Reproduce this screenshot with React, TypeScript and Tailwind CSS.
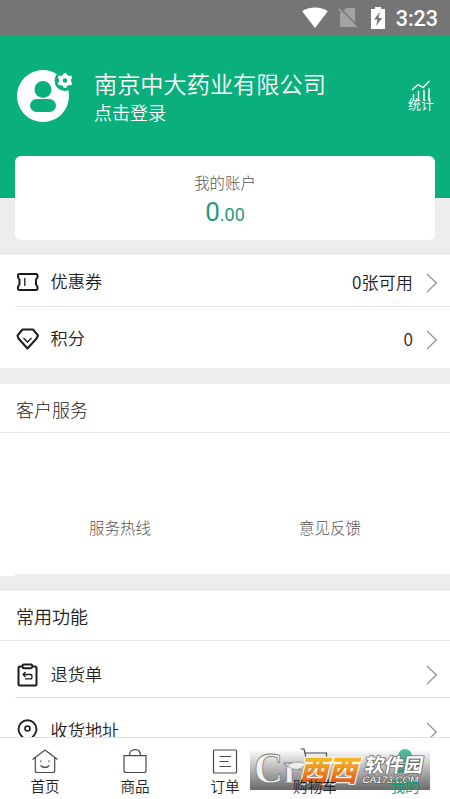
import React from "react";

function Chevron() {
  return (
    <svg width="12" height="20" viewBox="0 0 12 20" fill="none" stroke="#8c8c8c" strokeWidth="1.1">
      <path d="M1 1l9.300 9L1 19" />
    </svg>
  );
}

function StatusBar() {
  return (
    <header className="relative flex h-9 shrink-0 items-center justify-end bg-[#757575] pr-[12px] text-white">
      <svg className="mr-[10px]" width="26" height="22" viewBox="0 0 26 22" fill="#fff">
        <path d="M.2 4.200C7-.8 19-.8 25.800 4.200L13 21z" />
      </svg>
      <svg className="mr-[13px]" width="20" height="22" viewBox="0 0 20 22">
        <path d="M8 1h9v19H2V7z" fill="#a3a3a3" />
        <path d="M2 1l18 18.500" stroke="#757575" strokeWidth="1.500" />
        <path d="M.8 2l18 18.500" stroke="#a3a3a3" strokeWidth="1.600" />
      </svg>
      <svg className="mr-[11px]" width="14" height="22" viewBox="0 0 14 22">
        <path d="M4 0h6v2h4v20H0V2h4z" fill="#fff" />
        <path d="M9 5L3 12.500h3.500L5 19l6-8H7.500z" fill="#757575" />
      </svg>
      <span className="mt-[2px] font-['Roboto',sans-serif] text-[21.500px] leading-none font-medium">3:23</span>
    </header>
  );
}

function Avatar() {
  return (
    <svg width="58" height="56" viewBox="0 0 58 56">
      <circle cx="27" cy="28" r="26" fill="#fff" />
      <circle cx="27" cy="21.500" r="8.500" fill="#0aaf7c" />
      <rect x="14" y="31" width="26" height="13" rx="6.500" fill="#0aaf7c" />
      <circle cx="49" cy="12.500" r="10.500" fill="#0aaf7c" />
      <circle cx="49" cy="12.500" r="4.200" fill="none" stroke="#fff" strokeWidth="3.800" />
      <g stroke="#fff" strokeWidth="3.800" strokeLinecap="round" transform="translate(0 .5)">
        <path d="M49 6.800v-.5M49 17.200v.5M44.200 9.300l-.4-.2M44.200 14.700l-.4.2M53.800 9.300l.4-.2M53.800 14.700l.4.2" />
      </g>
    </svg>
  );
}

function ProfileHeader() {
  return (
    <section className="h-[162px] shrink-0 bg-[#0aaf7c] font-[350] text-white">
      <div className="flex items-start pt-[32px] pr-[16px] pl-4">
        <Avatar />
        <div className="ml-[20px] pt-[1px]">
          <div className="text-[23.200px] leading-[28px]">南京中大药业有限公司</div>
          <div className="text-[18px] leading-[30px]">点击登录</div>
        </div>
        <div className="ml-auto flex flex-col items-center pt-[12px]">
          <svg width="22" height="22" viewBox="0 0 22 22" fill="none" stroke="#fff" strokeWidth="1.400">
            <path d="M2 10l6-5.500 5 3 6.500-6.500M3.500 21v-7M8.500 21V11M14 21v-11M19 21V8.500" />
          </svg>
          <span className="-mt-[6px] text-[13px] leading-[15px]">统计</span>
        </div>
      </div>
    </section>
  );
}

function AccountCard() {
  return (
    <section className="relative mx-[15px] -mt-[42px] flex h-[84px] shrink-0 flex-col items-center rounded-md bg-white pt-[16px]">
      <div className="text-[15.400px] leading-5 font-light text-[#555]">我的账户</div>
      <div className="mt-[3px] font-['Roboto',sans-serif] leading-[34px] text-[#269b79]">
        <span className="text-[26px]">0</span>
        <span className="text-[18px]">.00</span>
      </div>
    </section>
  );
}

const CouponIcon = () => (
  <svg width="24" height="24" viewBox="0 0 24 24" fill="none" stroke="#1c1c1c" strokeWidth="2" strokeLinejoin="round">
    <path d="M3.500 4h16.500q1.500 0 1.500 1.300V7.500l-1.500 2v5l1.500 2v2.200q0 1.300-1.500 1.300H3.500Q2 20 2 18.700v-2.200l1.500-2v-5L2 7.500V5.300Q2 4 3.500 4z" />
    <path d="M8.800 8v8" strokeWidth="1.300" />
  </svg>
);

const PointsIcon = () => (
  <svg width="24" height="24" viewBox="0 0 24 24" fill="none" stroke="#1c1c1c" strokeWidth="2" strokeLinejoin="round">
    <path d="M6.500 2.500h10.500l5 6-1.500 3L11.500 21.500 2.500 11.500l-1-3z" />
    <path d="M7.500 11l4 4 4-4" strokeWidth="1.400" />
  </svg>
);

const ReturnIcon = () => (
  <svg width="24" height="24" viewBox="0 0 24 24" fill="none" stroke="#1c1c1c" strokeWidth="2" strokeLinejoin="round">
    <path d="M6 3.500H4Q2.500 3.500 2.500 5v16q0 1.500 1.500 1.500h15q1.500 0 1.500-1.500V5q0-1.500-1.500-1.500h-2.500" />
    <path d="M8 1.500h7q1.300 0 1.300 1.800T15 5.200H8q-1.500 0-1.500-1.900T8 1.500z" />
    <path d="M7.500 11.500h7q1.500 0 1.500 2.200t-1.500 2.200H9M9.500 9L7 11.500l2.500 2.500" strokeWidth="1.300" />
  </svg>
);

const PinIcon = () => (
  <svg width="24" height="24" viewBox="0 0 24 24" fill="none" stroke="#1c1c1c" strokeWidth="1.900">
    <path d="M11.500 22.500S2.500 16.500 2.500 10.300a9 9 0 0 1 18 0C20.500 16.500 11.500 22.500 11.500 22.500z" />
    <circle cx="11.500" cy="9.500" r="2.500" strokeWidth="1.600" />
  </svg>
);

type RowProps = { icon: React.ReactNode; label: string; value?: string };

function Row({ icon, label, value }: RowProps) {
  return (
    <div className="flex w-full items-center pr-[12px] pl-4">
      {icon}
      <span className="-mt-[2px] ml-[10.500px] text-[17.200px] leading-6 font-[350] text-[#222]">{label}</span>
      <span className="-mt-[1px] mr-[13px] ml-auto text-[17.200px] leading-6 font-[350] text-[#222]">{value}</span>
      <span className="mt-[1px]">
        <Chevron />
      </span>
    </div>
  );
}

function Watermark() {
  return (
    <svg className="absolute top-[11px] left-[250px]" width="180" height="41" viewBox="0 0 180 41" overflow="visible">
      <defs>
        <linearGradient id="shade" x1="0" y1="0" x2="0" y2="1">
          <stop offset="0" stopColor="#555" stopOpacity="0" />
          <stop offset="1" stopColor="#555" stopOpacity=".88" />
        </linearGradient>
        <linearGradient id="orange" x1="0" y1="0" x2="0" y2="1">
          <stop offset="0.3" stopColor="#f5b52a" />
          <stop offset="0.9" stopColor="#dd501f" />
        </linearGradient>
      </defs>
      <rect width="180" height="41" fill="url(#shade)" />
      <text
        x="4"
        y="34"
        fontSize="45"
        fontWeight="700"
        textLength="47"
        lengthAdjust="spacingAndGlyphs"
        fontFamily="Liberation Serif, serif"
        fill="#f2f2f2"
        stroke="#777"
        strokeWidth=".8"
      >
        Cr
      </text>
      <path d="M37 17q8-7 19-2-8 10-19 2z" fill="#ededed" stroke="#777" strokeWidth=".6" />
      <text
        transform="skewX(-14)"
        x="57"
        y="32"
        fontSize="29"
        fontWeight="900"
        textLength="58"
        lengthAdjust="spacingAndGlyphs"
        fontFamily="Noto Sans CJK SC, sans-serif"
        fill="url(#orange)"
        stroke="#fff6e6"
        strokeWidth="2.400"
        paintOrder="stroke"
      >
        西西
      </text>
      <g transform="skewX(-10)" fill="#fff" stroke="#666" strokeWidth="1.600" paintOrder="stroke" strokeLinejoin="round">
        <text x="118" y="23.500" fontSize="19.500" fontWeight="700" fontFamily="Noto Sans CJK SC, sans-serif">软件园</text>
        <text x="118" y="34" fontSize="9.500" fontFamily="Liberation Sans, sans-serif" textLength="56" lengthAdjust="spacingAndGlyphs">CA173.COM</text>
      </g>
    </svg>
  );
}

const tabs = [
  {
    label: "首页",
    icon: <path d="M.5 10.500L13 1l12.500 9.500M3.300 8.800V21.500q0 2 2 2h15.400q2 0 2-2V8.800M8.500 16.500q4.500 4 9 0M9 11.500v1.500M17 11.500v1.500" />,
  },
  {
    label: "商品",
    icon: <path d="M2 6.700h22V21.500q0 2-2 2H4q-2 0-2-2zM7.500 6.500q0-5.800 5.500-5.800t5.500 5.800" />,
  },
  {
    label: "订单",
    icon: <path d="M2.500 1h21q1 0 1 1v21q0 1-1 1h-21q-1 0-1-1V2q0-1 1-1zM7.500 7.500H19M7.500 12.500h9M7.500 17.500H19" />,
  },
  {
    label: "购物车",
    icon: <path d="M-1.500 0H2l4 17h18.500V4H3.500" />,
  },
  {
    label: "我的",
    active: true,
    icon: <path d="M6 7a7 7 0 0 1 14 0 7 7 0 0 1-14 0zM3 24q0-9 10-9t10 9z" fill="#4fc09c" stroke="none" />,
  },
];

function TabBar() {
  return (
    <nav className="relative grid h-[62px] shrink-0 grid-cols-5 border-t border-[#e0e0e0] bg-white">
      {tabs.map((tab) => (
        <div key={tab.label} className="flex flex-col items-center pt-[11px]">
          <svg width="26" height="26" viewBox="0 0 26 26" fill="none" stroke="#444c52" strokeWidth="1.200" overflow="visible">
            {tab.icon}
          </svg>
          <span
            className={`relative z-10 mt-[1px] text-[14.600px] leading-5 font-[350] ${
              tab.active ? "text-[#0c9b70]" : "text-[#222]"
            }`}
          >
            {tab.label}
          </span>
        </div>
      ))}
      <Watermark />
    </nav>
  );
}

export default function App() {
  return (
    <div className="flex h-[799px] w-[450px] flex-col overflow-hidden bg-[#ededed] font-['Noto_Sans_CJK_SC',sans-serif]">
      <StatusBar />
      <main className="flex min-h-0 flex-1 flex-col overflow-hidden">
        <ProfileHeader />
        <AccountCard />

        {/* Coupons and points */}
        <section className="mt-[15px] shrink-0 bg-white">
          <div className="flex h-[51px] items-center pt-[3px]">
            <Row icon={<CouponIcon />} label="优惠券" value="0张可用" />
          </div>
          <div className="ml-[15px] h-px bg-[#e3e3e3]" />
          <div className="flex h-[61px] items-center pt-[3px]">
            <Row icon={<PointsIcon />} label="积分" value="0" />
          </div>
        </section>

        {/* Customer service */}
        <section className="mt-4 shrink-0 bg-white">
          <h2 className="flex h-[49px] items-center border-b border-[#e6e6e6] pt-[3px] pl-4 text-[18px] font-light text-[#222]">
            客户服务
          </h2>
          <div className="grid h-[141px] grid-cols-2 items-end px-[15px] pb-[37px] text-center text-[15.500px] leading-5 font-light text-[#555]">
            <span>服务热线</span>
            <span>意见反馈</span>
          </div>
          <div className="ml-[15px] h-[2px] bg-[#ededed]" />
        </section>

        {/* Common functions */}
        <section className="mt-[15px] shrink-0 bg-white">
          <h2 className="flex h-[50px] items-center border-b border-[#e6e6e6] pt-[2px] pl-4 text-[18px] font-[350] text-[#222]">
            常用功能
          </h2>
          <div className="flex h-[56px] items-center pt-[11px]">
            <Row icon={<ReturnIcon />} label="退货单" />
          </div>
          <div className="ml-[15px] h-px bg-[#e3e3e3]" />
          <div className="flex h-[60px] items-center pt-[6px]">
            <Row icon={<PinIcon />} label="收货地址" />
          </div>
        </section>
      </main>
      <TabBar />
    </div>
  );
}
